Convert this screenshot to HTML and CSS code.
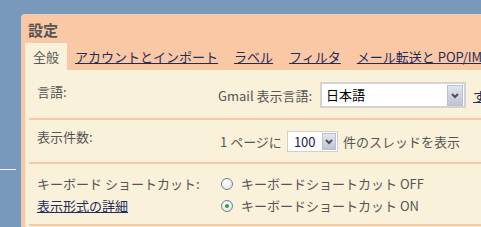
FILE: index.html
```html
<!DOCTYPE html>
<html lang="ja">

<head>
    <meta charset="utf-8">
    <title>設定</title>
    <link rel="stylesheet" href="styles.css">
</head>

<body>
    <div class="seite">
        <div class="rand"><div class="strich"></div></div>
        <div class="panel">
            <h1>設定</h1>
            <nav class="tabs">
                <span class="tab valgt">全般</span>
                <a class="tab" href="#">アカウントとインポート</a>
                <a class="tab" href="#">ラベル</a>
                <a class="tab" href="#">フィルタ</a>
                <a class="tab" href="#">メール転送と POP/IMAP</a>
            </nav>
            <div class="inhalt">
                <div class="zeile z1">
                    <div class="label">言語:</div>
                    <div class="wert">
                        <span>Gmail 表示言語:</span>
                        <span class="auswahl breit">
                            <span class="wahl-text">日本語</span>
                            <span class="pfeil"><svg width="8" height="6" viewBox="0 0 8 6"><polyline points="1,1 4,4 7,1" fill="none" stroke="#4a4f5a" stroke-width="2"/></svg></span>
                        </span>
                        <a class="mehr" href="#">すべての言語を表示</a>
                    </div>
                </div>
                <div class="zeile z2">
                    <div class="label">表示件数:</div>
                    <div class="wert">
                        <span>1 ページに</span>
                        <span class="auswahl schmal">
                            <span class="wahl-text">100</span>
                            <span class="pfeil"><svg width="8" height="6" viewBox="0 0 8 6"><polyline points="1,1 4,4 7,1" fill="none" stroke="#4a4f5a" stroke-width="2"/></svg></span>
                        </span>
                        <span>件のスレッドを表示</span>
                    </div>
                </div>
                <div class="zeile z3">
                    <div class="label">
                        <div>キーボード ショートカット:</div>
                        <a href="#">表示形式の詳細</a>
                    </div>
                    <div class="wert-liste">
                        <div class="radio-zeile"><span class="radio"></span>キーボードショートカット OFF</div>
                        <div class="radio-zeile"><span class="radio an"></span>キーボードショートカット ON</div>
                    </div>
                </div>
            </div>
        </div>
    </div>
</body>

</html>
```

FILE: styles.css
```css
body {
    margin: 0;
    background-color: #7899bb;
    font-family: "Noto Sans CJK JP", sans-serif;
    font-size: 13px;
    color: #555;
    overflow: hidden;
}

a {
    color: #1f2d5c;
}

.seite {
    display: flex;
    height: 227px;
    overflow: hidden;
}

.rand {
    width: 21px;
    flex: none;
}

.strich {
    margin-top: 169px;
    width: 16px;
    height: 1px;
    background-color: #eef2f7;
}

.panel {
    flex: none;
    box-sizing: border-box;
    width: 460px;
    height: 213px;
    margin-top: 14px;
    padding-left: 4px;
    background-color: #fac8a5;
    border-top-left-radius: 4px;
    overflow: hidden;
}

h1 {
    margin: 0;
    padding: 6px 0 4px 3px;
    font-size: 15px;
    font-weight: bold;
    line-height: 19px;
    color: #555;
}

.tabs {
    display: flex;
    height: 27px;
    white-space: nowrap;
}

.tab {
    padding: 0 8px;
    line-height: 27px;
}

.valgt {
    background-color: #f9f1da;
    color: #555;
}

.inhalt {
    background-color: #f9f1da;
    padding-left: 4px;
    height: 200px;
}

.zeile {
    display: flex;
    padding-left: 8px;
    border-bottom: 2px solid #fac8a5;
    white-space: nowrap;
}

.z1 {
    height: 48px;
}

.z2 {
    height: 42px;
}

.z3 {
    height: 60px;
}

.label {
    width: 181px;
    flex: none;
    line-height: 16px;
}

.z1 .label {
    padding-top: 14px;
}

.z2 .label {
    padding-top: 9px;
}

.z3 .label {
    padding-top: 9px;
    line-height: 22px;
}

.wert {
    display: flex;
    align-items: center;
    align-self: flex-start;
}

.z1 .wert {
    height: 26px;
    margin-top: 12px;
}

.z2 .wert {
    height: 21px;
    margin-top: 11px;
    padding-left: 2px;
}

.auswahl {
    display: flex;
    flex: none;
    box-sizing: border-box;
    background-color: #fff;
    color: #000;
}

.breit {
    width: 146px;
    height: 26px;
    margin: 0 7px 0 8px;
    border: 2px solid #d3d3d3;
    padding: 1px 1px 0 0;
}

.schmal {
    width: 51px;
    height: 21px;
    margin: 0 5px 0 5px;
    border: 1px solid #cfcfcf;
    padding: 1px 1px 1px 0;
}

.wahl-text {
    flex: 1;
    padding-left: 4px;
    line-height: 20px;
}

.schmal .wahl-text {
    padding-left: 6px;
    line-height: 17px;
    color: #1a1a4a;
}

.pfeil {
    display: flex;
    align-items: center;
    justify-content: center;
    width: 16px;
    box-sizing: border-box;
    border: 1px solid #b9bfcd;
    background: linear-gradient(#e2e5ee, #bfc4d2);
}

.schmal .pfeil {
    width: 14px;
}

.wert-liste {
    padding-top: 9px;
    padding-left: 3px;
    line-height: 22px;
}

.radio-zeile {
    display: flex;
    align-items: center;
}

.radio {
    display: inline-flex;
    align-items: center;
    justify-content: center;
    box-sizing: border-box;
    width: 12px;
    height: 12px;
    margin-right: 8px;
    border: 1px solid #6f8194;
    border-radius: 50%;
    background: radial-gradient(circle at 40% 35%, #fff, #dcdfe4);
}

.an::after {
    content: "";
    width: 4px;
    height: 4px;
    border-radius: 50%;
    background-color: #2fa42f;
}
```
